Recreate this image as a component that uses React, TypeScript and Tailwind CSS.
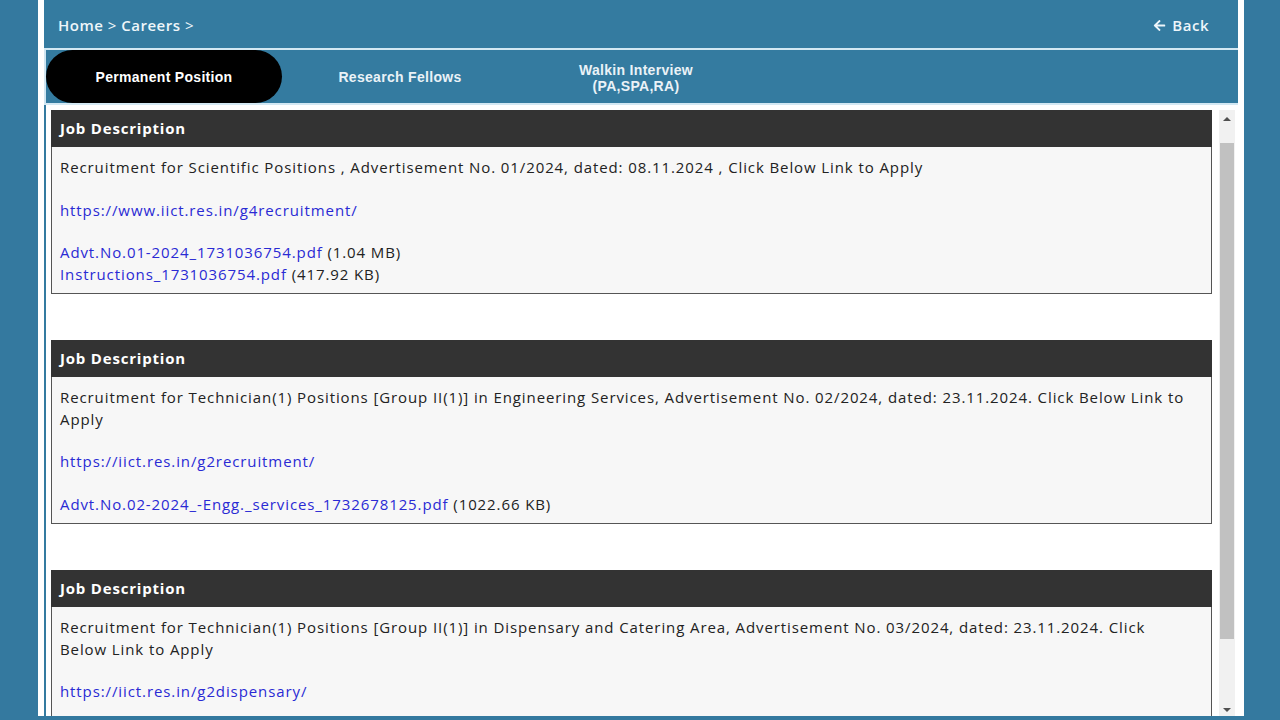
import { FaArrowLeft } from "react-icons/fa";

const body = "font-['Open_Sans',sans-serif]";

interface Job {
  text: string;
  link: string;
  files: { name: string; size: string }[];
}

const jobs: Job[] = [
  {
    text: "Recruitment for Scientific Positions , Advertisement No. 01/2024, dated: 08.11.2024 , Click Below Link to Apply",
    link: "https://www.iict.res.in/g4recruitment/",
    files: [
      { name: "Advt.No.01-2024_1731036754.pdf", size: "(1.04 MB)" },
      { name: "Instructions_1731036754.pdf", size: "(417.92 KB)" },
    ],
  },
  {
    text: "Recruitment for Technician(1) Positions [Group II(1)] in Engineering Services, Advertisement No. 02/2024, dated: 23.11.2024. Click Below Link to Apply",
    link: "https://iict.res.in/g2recruitment/",
    files: [{ name: "Advt.No.02-2024_-Engg._services_1732678125.pdf", size: "(1022.66 KB)" }],
  },
  {
    text: "Recruitment for Technician(1) Positions [Group II(1)] in Dispensary and Catering Area, Advertisement No. 03/2024, dated: 23.11.2024. Click Below Link to Apply",
    link: "https://iict.res.in/g2dispensary/",
    files: [],
  },
];

function JobCard({ job }: { job: Job }) {
  const more = job.files.length === 0;
  return (
    <div className="mb-[46px]">
      <div className="h-[37px] bg-[#333333] flex items-center pl-[9px] text-white text-[15px] font-bold tracking-[0.8px]">
        Job Description
      </div>
      <div
        className={`bg-[#f7f7f7] border border-t-0 border-[#555] pl-[8px] pr-[21px] pt-[10px] text-[15px] leading-[21.5px] text-[#222] tracking-[0.9px] ${
          more ? "pb-[60px]" : "pb-[8px]"
        }`}
      >
        <p>{job.text}</p>
        <p className="mt-[21px]">
          <a className="text-[#2a2ad4]">{job.link}</a>
        </p>
        {!more && (
          <div className="mt-[21px]">
            {job.files.map((f) => (
              <div key={f.name}>
                <a className="text-[#2a2ad4]">{f.name}</a> {f.size}
              </div>
            ))}
          </div>
        )}
      </div>
    </div>
  );
}

export default function App() {
  return (
    <div className={`w-[1280px] h-[720px] bg-[#34799f] overflow-hidden pl-[38px] ${body}`}>
      <div className="w-[1206px] h-[716px] bg-white px-[6px] flex flex-col">
        <div className="h-[48px] bg-[#347ba0] flex items-center justify-between pl-[14px] pr-[29px] pt-[2px] text-[#eef6fa] text-[15px] font-semibold tracking-[0.5px]">
          <div>
            Home <span className="font-normal">&gt;</span> Careers <span className="font-normal">&gt;</span>
          </div>
          <div className="flex items-center gap-[6px]">
            <FaArrowLeft className="w-[13px] h-[13px]" />
            Back
          </div>
        </div>
        <div className="h-[2px] bg-[#d3e8f3]" />
        <div className="h-[53px] bg-[#347ba0] border-l-2 border-[#cfe5f1] flex items-stretch font-['Liberation_Sans',Arial,sans-serif] text-[14px] font-bold text-[#eaf2f7] tracking-[0.3px]">
          <div className="w-[236px] rounded-full bg-black text-white flex items-center justify-center pt-[2px]">
            Permanent Position
          </div>
          <div className="w-[236px] flex items-center justify-center pt-[2px]">Research Fellows</div>
          <div className="w-[236px] flex flex-col items-center justify-center leading-[16px] text-center pt-[2px]">
            <span>Walkin Interview</span>
            <span>(PA,SPA,RA)</span>
          </div>
        </div>
        <div className="h-[2px] bg-[#d3e8f3]" />
        <div className="flex-1 min-h-0 flex border-l-2 border-[#347ba0] pl-[5px] pt-[5px] overflow-hidden">
          <div className="w-[1161px] shrink-0 overflow-hidden">
            {jobs.map((j, i) => (
              <JobCard key={i} job={j} />
            ))}
          </div>
          <div className="ml-[7px] w-[16px] shrink-0 bg-[#f1f1f1] flex flex-col h-[608px]">
            <div className="h-[17px] flex items-center justify-center">
              <div className="w-0 h-0 border-l-[4px] border-r-[4px] border-b-[4px] border-l-transparent border-r-transparent border-b-[#505050]" />
            </div>
            <div className="flex-1 pt-[16px] px-[1px]">
              <div className="h-[496px] bg-[#c1c1c1]" />
            </div>
            <div className="h-[17px] flex items-center justify-center">
              <div className="w-0 h-0 border-l-[4px] border-r-[4px] border-t-[4px] border-l-transparent border-r-transparent border-t-[#505050]" />
            </div>
          </div>
        </div>
      </div>
    </div>
  );
}
